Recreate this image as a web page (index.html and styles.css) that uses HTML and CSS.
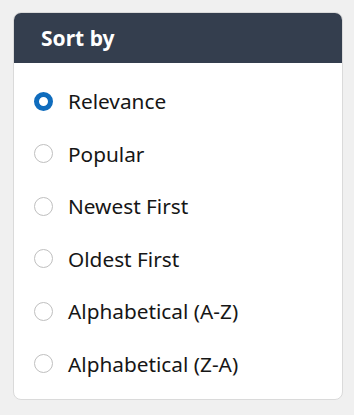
FILE: index.html
```html
<!DOCTYPE html>
<html>
<head>
<meta charset="utf-8">
<link rel="stylesheet" href="styles.css">
</head>
<body>
<div class="card">
  <div class="card-header">Sort by</div>
  <div class="options">
    <label class="option"><span class="radio checked"></span><span class="label">Relevance</span></label>
    <label class="option"><span class="radio"></span><span class="label">Popular</span></label>
    <label class="option"><span class="radio"></span><span class="label">Newest First</span></label>
    <label class="option"><span class="radio"></span><span class="label">Oldest First</span></label>
    <label class="option"><span class="radio"></span><span class="label">Alphabetical (A-Z)</span></label>
    <label class="option"><span class="radio"></span><span class="label">Alphabetical (Z-A)</span></label>
  </div>
</div>
</body>
</html>
```
FILE: styles.css
```css
html, body {
  margin: 0;
  background: #f0f0f0;
}
body {
  padding: 12px 11px 0 13px;
  font-family: "Noto Sans", "Open Sans", sans-serif;
  color: #161616;
}
.card {
  width: 328px;
  background: #ffffff;
  border: 1px solid #dadada;
  border-radius: 8px;
  overflow: hidden;
}
.card-header {
  height: 50px;
  box-sizing: border-box;
  background: #343e4e;
  color: #ffffff;
  font-weight: 700;
  font-size: 21px;
  display: flex;
  align-items: center;
  padding: 0 27px 1px;
}
.options {
  padding: 12px 20px 9px 20px;
  display: flex;
  flex-direction: column;
}
.option {
  height: 52.5px;
  display: flex;
  align-items: center;
  gap: 15px;
  font-size: 20.8px;
}
.radio {
  width: 19px;
  height: 19px;
  box-sizing: border-box;
  border-radius: 50%;
  border: 1px solid #bfbfbf;
  background: #ffffff;
  flex: none;
}
.radio.checked {
  border: 5.5px solid #0f6cbd;
}
```
